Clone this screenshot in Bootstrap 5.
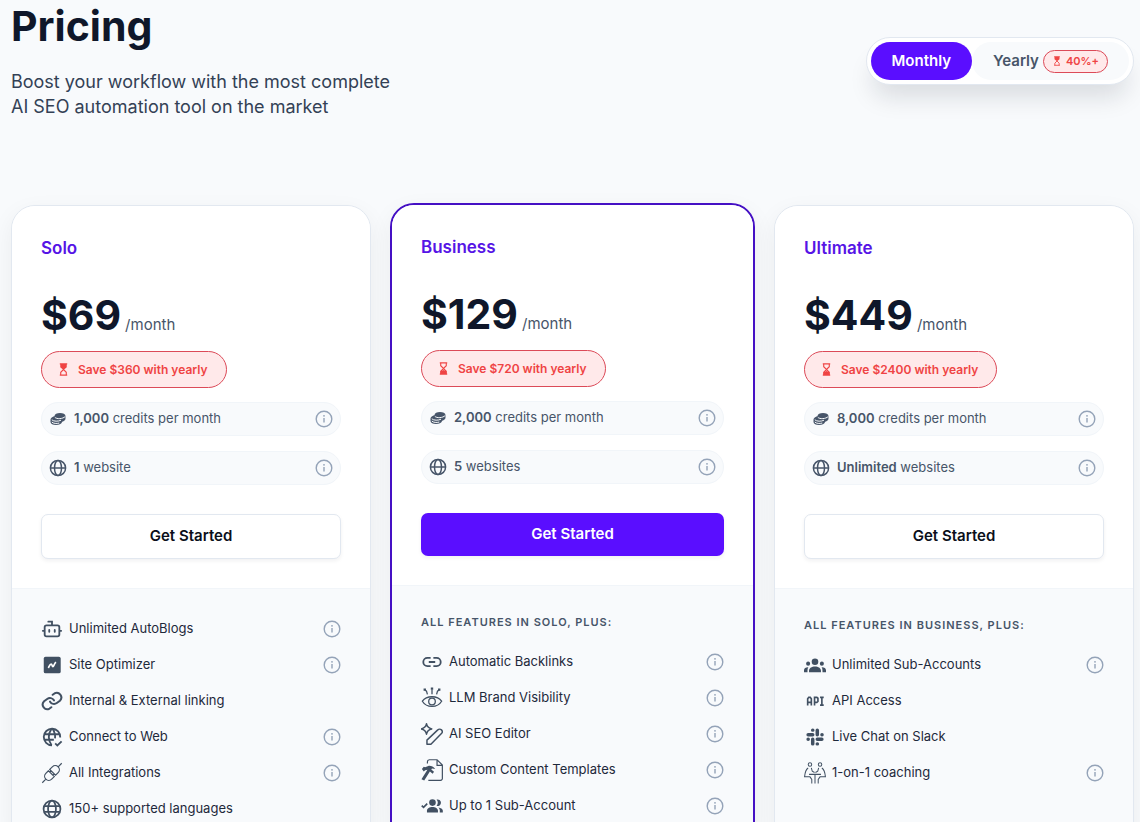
<!DOCTYPE html>
<html lang="en">
<head>
<meta charset="utf-8">
<meta name="viewport" content="width=device-width, initial-scale=1">
<title>Pricing</title>
<link href="https://cdn.jsdelivr.net/npm/bootstrap@5.3.0/dist/css/bootstrap.min.css" rel="stylesheet">
<style>
  :root { --violet: #5a0eff; --ink: #0f172a; --slate: #475569; --line: #e2e8f0; --mist: #f8fafc; --coral: #ef4444; }
  body { font-family: Inter, "Liberation Sans", sans-serif; background: var(--mist); color: var(--ink); height: 100vh; overflow: hidden; }
  svg { flex: none; }
  .page-wrap { padding: 0 6px 0 11px; }
  .page-head { height: 203px; }
  .page-title { font-size: 41px; line-height: 52px; font-weight: 700; margin: 0 0 17px; }
  .page-lead { font-size: 18px; line-height: 25px; color: #334155; }
  .period { margin-top: 37px; background: #fff; border: 1px solid var(--line); border-radius: 24px; padding: 4px; box-shadow: 0 18px 24px -6px rgba(15,23,42,.13); }
  .period button { border: 0; border-radius: 19px; height: 38px; padding: 0 21px; font-size: 15px; font-weight: 600; color: var(--slate); background: var(--mist); }
  .period button.is-on { background: var(--violet); color: #fff; }
  .deal { border: 1px solid #dc4a58; background: #ffe9ea; color: var(--coral); font-weight: 600; border-radius: 20px; }
  .deal-sm { font-size: 11px; height: 23px; padding: 0 8px; }
  .deal-lg { font-size: 12px; height: 37px; padding: 0 18px 0 15px; margin-top: 12px; }
  .plans { display: grid; grid-template-columns: 360fr 365fr 360fr; gap: 19px; align-items: stretch; }
  .plan { background: var(--mist); border: 1px solid var(--line); border-radius: 24px; overflow: hidden; margin-top: 2px; box-shadow: 0 8px 24px rgba(15,23,42,.06); }
  .plan-hot { border: 2px solid #4510c4; margin-top: 0; }
  .plan-top { background: #fff; padding: 29px; }
  .plan-feats { padding: 29px; border-top: 1px solid #f1f5f9; }
  .plan-name { font-size: 17px; line-height: 26px; font-weight: 600; color: #5614e6; margin: 0 0 30px; }
  .amount { font-size: 41px; line-height: 48px; font-weight: 700; }
  .per { font-size: 15px; color: var(--slate); }
  .quotas { gap: 15px; margin-top: 14px; }
  .quota { height: 34px; border: 1px solid #f1f5f9; background: var(--mist); border-radius: 17px; font-size: 13px; color: var(--slate); padding: 0 7px; gap: 7px; }
  .quota b { font-weight: 600; }
  .cta { height: 45px; border-radius: 7px; font-size: 15px; font-weight: 600; margin-top: 29px; background: #fff; border: 1px solid var(--line); color: #0b0f1a; box-shadow: 0 2px 4px rgba(15,23,42,.06); }
  .plan-hot .cta { height: 43px; background: var(--violet); color: #fff; border: 0; }
  .feats-title { font-size: 11px; line-height: 14px; font-weight: 600; color: var(--slate); letter-spacing: 1px; margin: 0 0 22px; text-transform: uppercase; }
  .feats { gap: 15px; }
  .feats li { height: 21px; font-size: 13px; color: #1e293b; }
  .feats .ic { width: 22px; height: 22px; margin-right: 6px; color: #415062; }
  .tip { border: 0; background: none; padding: 0; color: #94a3b8; display: flex; }
</style>
</head>
<body>
<svg class="d-none" aria-hidden="true">
  <symbol id="info" viewBox="0 0 18 18"><g fill="none" stroke="currentColor" stroke-width="1.4"><circle cx="9" cy="9" r="7.8"/><path d="M9 8v4.600"/></g><circle cx="9" cy="5.800" r=".9" fill="currentColor"/></symbol>
  <symbol id="glass" viewBox="0 0 12 14"><path d="M2 1h8M2 13h8M3 1v3l3 3 3-3V1M3 13v-3l3-3 3 3v3" fill="none" stroke="currentColor" stroke-width="1.2"/><path d="M3 13v-3l3-1.500L9 10v3z" fill="currentColor"/></symbol>
  <symbol id="glass-full" viewBox="0 0 12 14"><path d="M2 1h8M2 13h8M3 13v-3l3-3 3 3v3" fill="none" stroke="currentColor" stroke-width="1.2"/><path d="M2.500 1h7v3.500L6 7.500l-3.500-3z" fill="currentColor"/></symbol>
  <symbol id="coins" viewBox="0 0 18 18"><path d="M5.500 6C5.500 4 8 3 11 3s5.500 1 5.500 3v2.500c0 1.800-1.500 2.700-3.300 3.200C12.500 14 10 15 7 15c-3 0-5.500-1-5.500-3v-2.500C1.500 7.800 3.500 7 5.500 6z" fill="currentColor"/><path d="M5.800 7.200C7.500 9.400 14 9 16.200 6.500M2.800 9.800c2 1.800 6.500 1.800 9.200.4M2.800 12c1.500 1.600 5 1.800 7.500 1" fill="none" stroke="#f8fafc" stroke-width="1"/></symbol>
  <symbol id="globe" viewBox="0 0 18 18"><g fill="none" stroke="currentColor" stroke-width="1.500"><circle cx="9" cy="9" r="7.600"/><ellipse cx="9" cy="9" rx="3.500" ry="7.600"/><path d="M1.400 9h15.200"/></g></symbol>
  <symbol id="bot" viewBox="0 0 24 24"><path d="M12 8V4H8M2 14h2M20 14h2M9 13v2M15 13v2M6 8h12a2 2 0 0 1 2 2v8a2 2 0 0 1-2 2H6a2 2 0 0 1-2-2v-8a2 2 0 0 1 2-2z" fill="none" stroke="currentColor" stroke-width="2" stroke-linecap="round"/></symbol>
  <symbol id="optimizer" viewBox="0 0 24 24"><rect x="3" y="3" width="18.500" height="18" rx="2" fill="currentColor"/><path d="M8 15.200c1-1.500 1.500-4.200 3-4.200s.8 2.800 2 2.800 1.200-4 3.500-4.800" fill="none" stroke="#fff" stroke-width="1.800"/></symbol>
  <symbol id="chain" viewBox="0 0 24 24"><g transform="rotate(8 12 12)"><path d="M10 13a5 5 0 0 0 7.500.5l3-3a5 5 0 0 0-7-7L11.800 5.200M14 11a5 5 0 0 0-7.500-.5l-3 3a5 5 0 0 0 7 7l1.700-1.700" fill="none" stroke="currentColor" stroke-width="2.200" stroke-linecap="round"/></g></symbol>
  <symbol id="web-check" viewBox="0 0 24 24"><path d="M21 12.500A9 9 0 1 0 12 21M3.500 9h17M3.500 15H14M11.500 3c-4 6-4 12 0 18M12.500 3c2.500 3.500 3.200 7 2.800 10.500M15.500 19l2.300 2.300 4.700-4.600" fill="none" stroke="currentColor" stroke-width="2"/></symbol>
  <symbol id="world" viewBox="0 0 24 24"><g fill="none" stroke="currentColor" stroke-width="1.900"><circle cx="12" cy="12" r="9.200"/><ellipse cx="12" cy="12" rx="4.300" ry="9.200"/><path d="M3.500 8.800h17M3.500 15.200h17"/></g></symbol>
  <symbol id="plug" viewBox="0 0 24 24"><g transform="rotate(-45 12 12)" fill="none" stroke="currentColor" stroke-width="1.300"><path d="M-3 12h5.500M21.500 12h5.500M11 7.500H7a4.500 4.500 0 0 0 0 9h4zM13 7.500h4a4.500 4.500 0 0 1 0 9h-4zM11 9.500h2M11 14.500h2"/></g></symbol>
  <symbol id="backlink" viewBox="0 0 24 24"><path d="M10.500 7.500H7a4.500 4.500 0 0 0 0 9h3.500M13.500 7.500H17a4.500 4.500 0 0 1 0 9h-3.500M8.500 12h7" fill="none" stroke="currentColor" stroke-width="2"/></symbol>
  <symbol id="eye" viewBox="0 0 24 24"><g fill="none" stroke="currentColor" stroke-width="1.400"><path d="M1.500 15.500C6 9 18 9 22.500 15.500 18 23 6 23 1.500 15.500z"/><circle cx="12" cy="15.800" r="3.600"/><path d="M12 8V3M7 8 6 4.500 4 3M17 8l1-3.500L20 3"/></g><path d="M2.800 1.500h2.600V4H2.800zM10.700.5h2.600V3h-2.600zM18.600 1.500h2.600V4h-2.600z" fill="currentColor"/></symbol>
  <symbol id="pen" viewBox="0 0 24 24"><path d="M6 .8C6.500 4 8.500 5.800 11.800 6.500 8.500 7.200 6.500 9 6 12.200 5.500 9 3.500 7.200.2 6.500 3.500 5.800 5.500 4 6 .8zM6.500 23.200v-4.500L18.300 7.500a2.700 2.700 0 0 1 4 4L10.800 23.200z" fill="none" stroke="currentColor" stroke-width="1.600" stroke-linejoin="round"/></symbol>
  <symbol id="template" viewBox="0 0 24 24"><path d="M7 5V3A2.200 2.200 0 0 1 9 .8h8.500L23.300 6.500V21a2 2 0 0 1-2 2.300H8M17.500 1v6h5.800" fill="none" stroke="currentColor" stroke-width="1.300"/><path d="m1 11 2-2.500L4.500 9 8 7.500c3-.3 5.500.8 7.500 3.500l-3.500-.6-.8 1.100 3 2.500-1.500 2-3-2.500L3.500 23.500.5 22 7 11.800l-2.500.4L3 13.500z" fill="currentColor"/></symbol>
  <symbol id="user-check" viewBox="0 0 24 24"><g fill="currentColor"><circle cx="12.500" cy="8.300" r="3.600"/><path d="M6.500 19v-2c0-2.500 3-4 6-4s6 1.500 6 4v2zM17 5a3.600 3.600 0 1 1 0 6.800 5.500 5.500 0 0 0 0-6.800zM20.500 19v-2c0-1.500-.5-2.500-1.500-3.500 2.500.5 4.800 1.500 4.800 3.500v2z"/></g><path d="m.8 11.500 2 2 4-4" fill="none" stroke="currentColor" stroke-width="1.800"/></symbol>
  <symbol id="users" viewBox="0 0 24 24"><g fill="currentColor"><circle cx="12" cy="8.500" r="3.600"/><circle cx="4.500" cy="10.500" r="2.200"/><circle cx="19.500" cy="10.500" r="2.200"/><path d="M5.500 20v-2c0-2.800 3-4.500 6.500-4.500s6.500 1.700 6.500 4.500v2zM0 20v-2.200c0-2 2-3.500 4.800-3.300C4 15.500 3.800 17 3.800 20zM24 20v-2.200c0-2-2-3.500-4.800-3.300.8 1 1 2.500 1 5.500z"/></g></symbol>
  <symbol id="api" viewBox="0 0 24 24"><path d="M4 17V9.500L5.200 8h1.600L8 9.500V17M4 13.500h4M11.500 17V8H14l1.200 1v3.500l-1.200 1h-2.500M17.500 8h4M17.500 16.500h4M19.500 8v8.500" fill="none" stroke="currentColor" stroke-width="1.800"/></symbol>
  <symbol id="slack" viewBox="0 0 24 24"><g stroke="currentColor" stroke-width="3.800" stroke-linecap="round"><path d="M9.500 4.500h.1M4.500 9.500h5M14.500 4.500v5M19.600 9.500h.1M14.500 14.500h5M14.500 19.500h.1M9.500 14.500v5M4.500 14.500h.1"/></g></symbol>
  <symbol id="coach" viewBox="0 0 24 24"><g fill="none" stroke="currentColor" stroke-width="1.100"><circle cx="6.500" cy="2.700" r="1.900"/><circle cx="17.500" cy="2.700" r="1.900"/><path d="M4.500 6.500C3 7.500 1 12 .6 16.200H6.500L8.500 19v4.500M8 6.500 9 10l2.500 1.500M5.500 13.500h13M19.500 6.500c1.500 1 3.500 5.500 3.900 9.700H17.500L15.500 19v4.500M16 6.500 15 10l-2.500 1.500M12 13.500v10"/></g></symbol>
</svg>

<main class="page-wrap">
  <header class="page-head d-flex justify-content-between align-items-start">
    <div>
      <h1 class="page-title">Pricing</h1>
      <p class="page-lead mb-0">Boost your workflow with the most complete<br>AI SEO automation tool on the market</p>
    </div>
    <div class="period d-flex" role="group" aria-label="Billing period">
      <button type="button" class="is-on">Monthly</button>
      <button type="button" class="d-flex align-items-center gap-1">Yearly <span class="deal deal-sm d-inline-flex align-items-center gap-1"><svg width="10" height="10"><use href="#glass-full"/></svg>40%+</span></button>
    </div>
  </header>

  <div class="plans">
    <section class="plan">
      <div class="plan-top">
        <h2 class="plan-name">Solo</h2>
        <div class="d-flex align-items-baseline gap-1"><span class="amount">$69</span><span class="per">/month</span></div>
        <div class="deal deal-lg d-inline-flex align-items-center gap-2"><svg width="13" height="13"><use href="#glass-full"/></svg>Save $360 with yearly</div>
        <div class="quotas d-grid">
          <div class="quota d-flex align-items-center"><svg width="18" height="18"><use href="#coins"/></svg><span class="me-auto"><b>1,000</b> credits per month</span><button class="tip" aria-label="About credits"><svg width="18" height="18"><use href="#info"/></svg></button></div>
          <div class="quota d-flex align-items-center"><svg width="18" height="18"><use href="#globe"/></svg><span class="me-auto"><b>1</b> website</span><button class="tip" aria-label="About websites"><svg width="18" height="18"><use href="#info"/></svg></button></div>
        </div>
        <button type="button" class="cta w-100">Get Started</button>
      </div>
      <div class="plan-feats">
        <ul class="feats list-unstyled d-grid mb-0">
          <li class="d-flex align-items-center"><svg class="ic"><use href="#bot"/></svg><span class="me-auto">Unlimited AutoBlogs</span><button class="tip" aria-label="More"><svg width="18" height="18"><use href="#info"/></svg></button></li>
          <li class="d-flex align-items-center"><svg class="ic"><use href="#optimizer"/></svg><span class="me-auto">Site Optimizer</span><button class="tip" aria-label="More"><svg width="18" height="18"><use href="#info"/></svg></button></li>
          <li class="d-flex align-items-center"><svg class="ic"><use href="#chain"/></svg><span class="me-auto">Internal &amp; External linking</span></li>
          <li class="d-flex align-items-center"><svg class="ic"><use href="#web-check"/></svg><span class="me-auto">Connect to Web</span><button class="tip" aria-label="More"><svg width="18" height="18"><use href="#info"/></svg></button></li>
          <li class="d-flex align-items-center"><svg class="ic"><use href="#plug"/></svg><span class="me-auto">All Integrations</span><button class="tip" aria-label="More"><svg width="18" height="18"><use href="#info"/></svg></button></li>
          <li class="d-flex align-items-center"><svg class="ic"><use href="#world"/></svg><span class="me-auto">150+ supported languages</span></li>
        </ul>
      </div>
    </section>

    <section class="plan plan-hot">
      <div class="plan-top">
        <h2 class="plan-name">Business</h2>
        <div class="d-flex align-items-baseline gap-1"><span class="amount">$129</span><span class="per">/month</span></div>
        <div class="deal deal-lg d-inline-flex align-items-center gap-2"><svg width="13" height="13"><use href="#glass"/></svg>Save $720 with yearly</div>
        <div class="quotas d-grid">
          <div class="quota d-flex align-items-center"><svg width="18" height="18"><use href="#coins"/></svg><span class="me-auto"><b>2,000</b> credits per month</span><button class="tip" aria-label="About credits"><svg width="18" height="18"><use href="#info"/></svg></button></div>
          <div class="quota d-flex align-items-center"><svg width="18" height="18"><use href="#globe"/></svg><span class="me-auto"><b>5</b> websites</span><button class="tip" aria-label="About websites"><svg width="18" height="18"><use href="#info"/></svg></button></div>
        </div>
        <button type="button" class="cta w-100">Get Started</button>
      </div>
      <div class="plan-feats">
        <h3 class="feats-title">All features in Solo, plus:</h3>
        <ul class="feats list-unstyled d-grid mb-0">
          <li class="d-flex align-items-center"><svg class="ic"><use href="#backlink"/></svg><span class="me-auto">Automatic Backlinks</span><button class="tip" aria-label="More"><svg width="18" height="18"><use href="#info"/></svg></button></li>
          <li class="d-flex align-items-center"><svg class="ic"><use href="#eye"/></svg><span class="me-auto">LLM Brand Visibility</span><button class="tip" aria-label="More"><svg width="18" height="18"><use href="#info"/></svg></button></li>
          <li class="d-flex align-items-center"><svg class="ic"><use href="#pen"/></svg><span class="me-auto">AI SEO Editor</span><button class="tip" aria-label="More"><svg width="18" height="18"><use href="#info"/></svg></button></li>
          <li class="d-flex align-items-center"><svg class="ic"><use href="#template"/></svg><span class="me-auto">Custom Content Templates</span><button class="tip" aria-label="More"><svg width="18" height="18"><use href="#info"/></svg></button></li>
          <li class="d-flex align-items-center"><svg class="ic"><use href="#user-check"/></svg><span class="me-auto">Up to 1 Sub-Account</span><button class="tip" aria-label="More"><svg width="18" height="18"><use href="#info"/></svg></button></li>
        </ul>
      </div>
    </section>

    <section class="plan">
      <div class="plan-top">
        <h2 class="plan-name">Ultimate</h2>
        <div class="d-flex align-items-baseline gap-1"><span class="amount">$449</span><span class="per">/month</span></div>
        <div class="deal deal-lg d-inline-flex align-items-center gap-2"><svg width="13" height="13"><use href="#glass"/></svg>Save $2400 with yearly</div>
        <div class="quotas d-grid">
          <div class="quota d-flex align-items-center"><svg width="18" height="18"><use href="#coins"/></svg><span class="me-auto"><b>8,000</b> credits per month</span><button class="tip" aria-label="About credits"><svg width="18" height="18"><use href="#info"/></svg></button></div>
          <div class="quota d-flex align-items-center"><svg width="18" height="18"><use href="#globe"/></svg><span class="me-auto"><b>Unlimited</b> websites</span><button class="tip" aria-label="About websites"><svg width="18" height="18"><use href="#info"/></svg></button></div>
        </div>
        <button type="button" class="cta w-100">Get Started</button>
      </div>
      <div class="plan-feats">
        <h3 class="feats-title">All features in Business, plus:</h3>
        <ul class="feats list-unstyled d-grid mb-0">
          <li class="d-flex align-items-center"><svg class="ic"><use href="#users"/></svg><span class="me-auto">Unlimited Sub-Accounts</span><button class="tip" aria-label="More"><svg width="18" height="18"><use href="#info"/></svg></button></li>
          <li class="d-flex align-items-center"><svg class="ic"><use href="#api"/></svg><span class="me-auto">API Access</span></li>
          <li class="d-flex align-items-center"><svg class="ic"><use href="#slack"/></svg><span class="me-auto">Live Chat on Slack</span></li>
          <li class="d-flex align-items-center"><svg class="ic"><use href="#coach"/></svg><span class="me-auto">1-on-1 coaching</span><button class="tip" aria-label="More"><svg width="18" height="18"><use href="#info"/></svg></button></li>
        </ul>
      </div>
    </section>
  </div>
</main>
<script src="https://cdn.jsdelivr.net/npm/bootstrap@5.3.0/dist/js/bootstrap.bundle.min.js"></script>
</body>
</html>
